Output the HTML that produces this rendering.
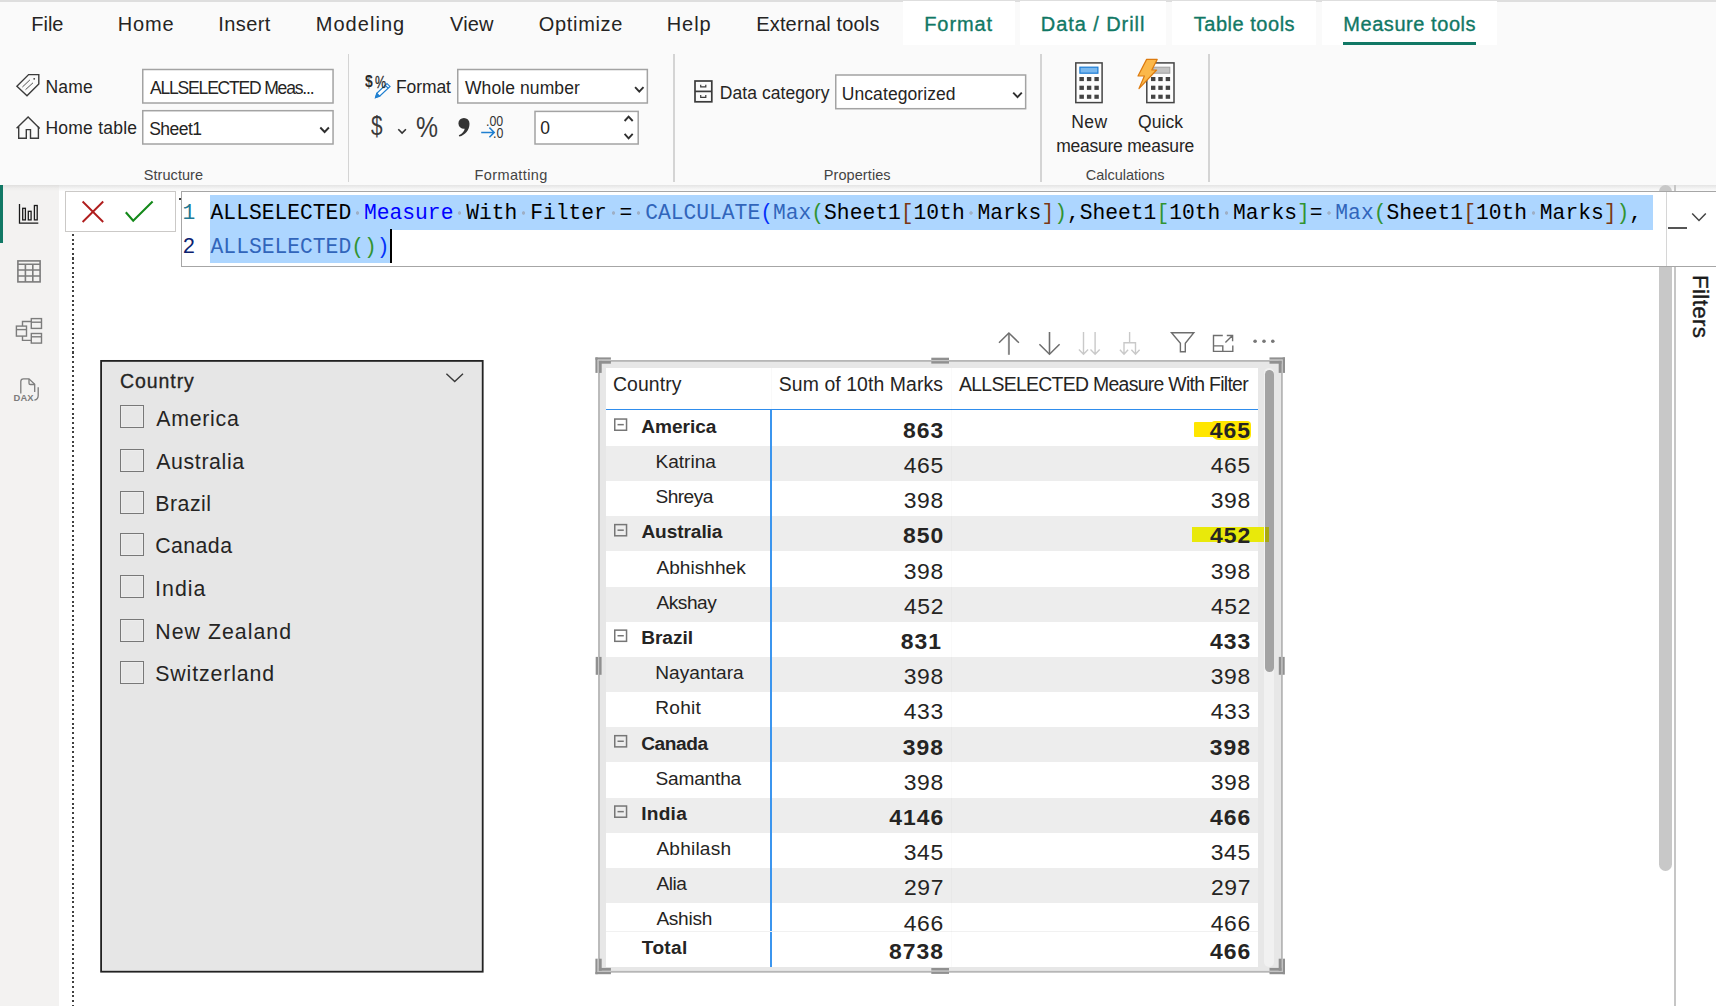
<!DOCTYPE html>
<html lang="en">
<head>
<meta charset="utf-8">
<title>Power BI Desktop - Measure tools</title>
<style>
html,body{margin:0;padding:0;}
body{width:1716px;height:1006px;overflow:hidden;position:relative;background:#fff;font-family:"Liberation Sans",sans-serif;color:#252423;}
.a{position:absolute;}
.t{position:absolute;line-height:0;white-space:pre;}
svg{position:absolute;overflow:visible;}
.box{position:absolute;background:#fff;border:1.5px solid #a6a6a6;box-sizing:border-box;}
.sep{position:absolute;width:1.5px;top:54px;height:128px;background:#d4d4d4;}
.tab{position:absolute;top:1px;height:44px;background:#fff;}
.cb{position:absolute;left:120px;width:24px;height:23px;box-sizing:border-box;border:1px solid #787878;background:#e7e7e7;box-shadow:inset 0 0 0 1px #ececec;}
.row{position:absolute;left:606px;width:652px;height:35.18px;}
.g{background:#ededed;}
.ex{position:absolute;left:613.8px;width:13.4px;height:13px;box-sizing:border-box;border:1.6px solid #737373;}
.ex:after{content:"";position:absolute;left:2px;right:2px;top:4.1px;height:1.7px;background:#5f5f5f;}
.m{font-family:"Liberation Mono",monospace;font-size:21.3px;position:absolute;white-space:pre;line-height:0;left:210.6px;}
.m i{font-style:normal;background:radial-gradient(circle at 50% 50%,#9fb0c6 0,#9fb0c6 1.4px,transparent 2px);}
</style>
</head>
<body>
<!-- ================= RIBBON ================= -->
<div class="a" id="ribbon" style="left:0;top:0;width:1716px;height:185px;background:#fafafa;"></div>
<div class="a" style="left:0;top:0;width:1716px;height:1.5px;background:#dedede;"></div>
<div class="tab" style="left:903px;width:112px;"></div>
<div class="tab" style="left:1020px;width:146px;"></div>
<div class="tab" style="left:1172px;width:144px;"></div>
<div class="tab" style="left:1322px;width:175px;"></div>
<div class="a" style="left:1343px;top:41.5px;width:133px;height:3.5px;background:#117865;"></div>
<!-- ribbon bottom shadow -->
<div class="a" style="left:0;top:185px;width:1716px;height:6px;background:linear-gradient(#e4e4e4,#f3f3f3 55%,#fcfcfc);"></div>
<!-- group separators -->
<div class="sep" style="left:347.5px;"></div>
<div class="sep" style="left:673px;"></div>
<div class="sep" style="left:1040px;"></div>
<div class="sep" style="left:1208px;"></div>
<!-- inputs -->
<svg class="a" style="left:0;top:0;" width="1716" height="1006" fill="#fff" stroke="#a3a3a3" stroke-width="1.5">
<rect x="142.75" y="69.5" width="190.3" height="33.5"/>
<rect x="142.75" y="110.7" width="190.3" height="33.3"/>
<rect x="457.75" y="69.5" width="189.6" height="33.5"/>
<rect x="535" y="111.4" width="103.2" height="32.6"/>
<rect x="835.75" y="75" width="189.9" height="33.7"/>
</svg>
<!-- ================= LEFT NAV ================= -->
<div class="a" style="left:0;top:185px;width:58.5px;height:821px;background:#f3f2f1;"></div>
<div class="a" style="left:0;top:185px;width:58.5px;height:6px;background:linear-gradient(#e0dfde,#eeedec 55%,#f3f2f1);"></div>
<div class="a" style="left:0;top:185px;width:2.8px;height:57.5px;background:#117865;"></div>
<!-- ================= CANVAS ================= -->
<div class="a" style="left:72px;top:234.2px;width:2px;height:772px;background:repeating-linear-gradient(#404040 0,#404040 2px,transparent 2px,transparent 4.7px);"></div>
<!-- outer scrollbar + filters pane -->
<div class="a" style="left:1659px;top:185px;width:13px;height:686px;background:#c8c8c8;border-radius:6.5px;"></div>
<div class="a" style="left:1674.3px;top:185px;width:1.4px;height:821px;background:#c6c6c6;"></div>
<!-- ================= FORMULA BAR ================= -->
<div class="a" style="left:65.2px;top:191px;width:110.7px;height:40.7px;box-sizing:border-box;border:1px solid #cbc9c7;background:#fff;"></div>
<div class="a" style="left:181px;top:191px;width:1535px;height:75.8px;box-sizing:border-box;border:1px solid #a6a6a6;border-right:0;background:#fff;"></div>
<div class="a" style="left:1666px;top:192px;width:1px;height:74px;background:#d6d6d6;"></div>
<div class="a" style="left:210px;top:195.4px;width:1443px;height:34.2px;background:#add6ff;"></div>
<div class="a" style="left:210px;top:229.6px;width:180px;height:33.8px;background:#add6ff;"></div>
<div class="a" style="left:390px;top:229.3px;width:2.2px;height:34.2px;background:#000;"></div>
<div class="a" style="left:1667.5px;top:227.3px;width:19.5px;height:2.2px;background:#555;"></div>
<div class="a" style="left:178.8px;top:198px;width:2px;height:1.8px;background:#3a3a3a;"></div>
<div class="m" style="top:213.00px;"><span style="color:#000000">ALLSELECTED</span><i> </i><span style="color:#0000ff">Measure</span><i> </i><span style="color:#000000">With</span><i> </i><span style="color:#000000">Filter</span><i> </i><span style="color:#000000">=</span><i> </i><span style="color:#3165bb">CALCULATE</span><span style="color:#0431fa">(</span><span style="color:#3165bb">Max</span><span style="color:#319331">(</span><span style="color:#000000">Sheet1</span><span style="color:#7b3814">[</span><span style="color:#000000">10th</span><i> </i><span style="color:#000000">Marks</span><span style="color:#7b3814">]</span><span style="color:#319331">)</span><span style="color:#000000">,</span><span style="color:#000000">Sheet1</span><span style="color:#319331">[</span><span style="color:#000000">10th</span><i> </i><span style="color:#000000">Marks</span><span style="color:#319331">]</span><span style="color:#000000">=</span><i> </i><span style="color:#3165bb">Max</span><span style="color:#319331">(</span><span style="color:#000000">Sheet1</span><span style="color:#7b3814">[</span><span style="color:#000000">10th</span><i> </i><span style="color:#000000">Marks</span><span style="color:#7b3814">]</span><span style="color:#319331">)</span><span style="color:#000000">,</span></div>
<div class="m" style="top:247.00px;"><span style="color:#3165bb">ALLSELECTED</span><span style="color:#319331">(</span><span style="color:#319331">)</span><span style="color:#0431fa">)</span></div>
<div class="m" style="left:182.6px;top:213.00px;color:#237893;">1</div>
<div class="m" style="left:182.6px;top:247.00px;color:#0b216f;">2</div>
<!-- ================= SLICER ================= -->
<svg class="a" style="left:0;top:0;" width="1716" height="1006"><rect x="101.1" y="360.9" width="381.6" height="610.8" fill="#e6e6e6" stroke="#222" stroke-width="1.8"/></svg>
<div class="cb" style="top:405px;"></div>
<div class="cb" style="top:449px;"></div>
<div class="cb" style="top:491px;"></div>
<div class="cb" style="top:533px;"></div>
<div class="cb" style="top:575px;"></div>
<div class="cb" style="top:619px;"></div>
<div class="cb" style="top:661px;"></div>
<!-- ================= TABLE VISUAL ================= -->
<svg class="a" style="left:0;top:0;" width="1716" height="1006"><rect x="599" y="360.9" width="682.9" height="610.9" fill="#e7e7e7" stroke="#b6b6b6" stroke-width="1.8"/></svg>
<div class="a" style="left:606px;top:368px;width:652px;height:599px;background:#fff;"></div>
<div class="row g" style="top:445.78px;height:35.18px;"></div>
<div class="row g" style="top:516.14px;height:35.18px;"></div>
<div class="row g" style="top:586.50px;height:35.18px;"></div>
<div class="row g" style="top:656.86px;height:35.18px;"></div>
<div class="row g" style="top:727.22px;height:35.18px;"></div>
<div class="row g" style="top:797.58px;height:35.18px;"></div>
<div class="row g" style="top:867.94px;height:35.18px;"></div>
<svg class="a" style="left:0;top:0;" width="1716" height="1006" fill="none" stroke="#767676" stroke-width="1.5"><rect x="614.75" y="419.05" width="11.8" height="11.2"/><path d="M617.5 424.65H623.8"/><rect x="614.75" y="524.59" width="11.8" height="11.2"/><path d="M617.5 530.19H623.8"/><rect x="614.75" y="630.13" width="11.8" height="11.2"/><path d="M617.5 635.73H623.8"/><rect x="614.75" y="735.67" width="11.8" height="11.2"/><path d="M617.5 741.27H623.8"/><rect x="614.75" y="806.03" width="11.8" height="11.2"/><path d="M617.5 811.63H623.8"/></svg>
<div class="a" style="left:606px;top:408.9px;width:652px;height:1.6px;background:#2f8ded;"></div>
<div class="a" style="left:770.2px;top:410px;width:1.7px;height:557px;background:#3b95ee;"></div>
<div class="a" style="left:606px;top:931px;width:652px;height:1px;background:#f1f1f1;"></div>
<div class="a" style="left:951px;top:368px;width:1px;height:599px;background:rgba(0,0,0,0.02);"></div>
<div class="a" style="left:771px;top:368px;width:1px;height:41px;background:rgba(0,0,0,0.025);"></div>
<!-- highlight -->
<div class="a" style="left:1194px;top:421.9px;width:24px;height:14.9px;background:#ffe600;border-radius:1px;"></div>
<div class="a" style="left:1211px;top:421px;width:40.2px;height:19px;background:#ffe600;border-radius:4px 4px 5px 8px;"></div>
<div class="a" style="left:1192px;top:527px;width:77px;height:14.6px;background:#e9e90a;"></div>
<!-- inner scrollbar -->
<div class="a" style="left:1263.8px;top:368px;width:10.4px;height:598.6px;background:#f1f1f1;border-radius:5.2px;"></div>
<div class="a" style="left:1265px;top:369.5px;width:8.8px;height:302.5px;background:#a3a3a3;border-radius:4.4px;"></div>
<div class="a" style="left:1265px;top:527px;width:4px;height:14.6px;background:#a8a810;"></div>
<svg class="a" style="left:0;top:0;" width="1716" height="1006" shape-rendering="auto"><rect x="595.40" y="357.40" width="15.50" height="2.30" fill="#909090"/><rect x="595.40" y="357.40" width="2.30" height="15.50" fill="#909090"/><rect x="597.70" y="359.70" width="13.20" height="1.20" fill="#c6c6c6"/><rect x="597.70" y="359.70" width="1.20" height="13.20" fill="#c6c6c6"/><rect x="598.90" y="360.90" width="12.00" height="2.80" fill="#909090"/><rect x="598.90" y="360.90" width="2.80" height="12.00" fill="#909090"/><rect x="1269.50" y="357.40" width="15.50" height="2.30" fill="#909090"/><rect x="1282.70" y="357.40" width="2.30" height="15.50" fill="#909090"/><rect x="1269.50" y="359.70" width="13.20" height="1.20" fill="#c6c6c6"/><rect x="1281.50" y="359.70" width="1.20" height="13.20" fill="#c6c6c6"/><rect x="1269.50" y="360.90" width="12.00" height="2.80" fill="#909090"/><rect x="1278.70" y="360.90" width="2.80" height="12.00" fill="#909090"/><rect x="595.40" y="971.90" width="15.50" height="2.30" fill="#909090"/><rect x="595.40" y="958.70" width="2.30" height="15.50" fill="#909090"/><rect x="597.70" y="970.70" width="13.20" height="1.20" fill="#c6c6c6"/><rect x="597.70" y="958.70" width="1.20" height="13.20" fill="#c6c6c6"/><rect x="598.90" y="967.90" width="12.00" height="2.80" fill="#909090"/><rect x="598.90" y="958.70" width="2.80" height="12.00" fill="#909090"/><rect x="1269.50" y="971.90" width="15.50" height="2.30" fill="#909090"/><rect x="1282.70" y="958.70" width="2.30" height="15.50" fill="#909090"/><rect x="1269.50" y="970.70" width="13.20" height="1.20" fill="#c6c6c6"/><rect x="1281.50" y="958.70" width="1.20" height="13.20" fill="#c6c6c6"/><rect x="1269.50" y="967.90" width="12.00" height="2.80" fill="#909090"/><rect x="1278.70" y="958.70" width="2.80" height="12.00" fill="#909090"/><rect x="931.30" y="357.70" width="17.70" height="2.30" fill="#909090"/><rect x="931.30" y="360.00" width="17.70" height="1.20" fill="#c6c6c6"/><rect x="931.30" y="361.20" width="17.70" height="2.40" fill="#909090"/><rect x="931.30" y="971.60" width="17.70" height="2.30" fill="#909090"/><rect x="931.30" y="970.40" width="17.70" height="1.20" fill="#c6c6c6"/><rect x="931.30" y="968.00" width="17.70" height="2.40" fill="#909090"/><rect x="595.70" y="656.90" width="2.30" height="17.90" fill="#909090"/><rect x="598.00" y="656.90" width="1.20" height="17.90" fill="#c6c6c6"/><rect x="599.20" y="656.90" width="2.40" height="17.90" fill="#909090"/><rect x="1282.40" y="656.90" width="2.30" height="17.90" fill="#909090"/><rect x="1281.20" y="656.90" width="1.20" height="17.90" fill="#c6c6c6"/><rect x="1278.80" y="656.90" width="2.40" height="17.90" fill="#909090"/></svg>
<svg class="a" style="left:0;top:0;" width="1716" height="1006" viewBox="0 0 1716 1006" fill="none" stroke-linecap="butt" stroke-linejoin="miter">
<!-- tag (Name) -->
<g stroke="#3b3b3b" stroke-width="1.4">
<path d="M28.6 74.6H38.8V83.9L27 95.8L16.9 86.2Z"/>
<path d="M22.4 87L29.9 79.9M25.5 89.7L33 82.8" stroke-width="1" stroke="#555"/>
<circle cx="34.2" cy="78.8" r="0.9" fill="#3b3b3b" stroke="none"/>
<!-- home -->
<path d="M16.6 128.2L28.1 116.9L39.7 128.4"/>
<path d="M18.7 126.5V138.3H26.3V129.6H30.5V138.3H38.4V126.5"/>
</g>
<!-- pencil of $% icon -->
<g stroke="#1f7fd0" stroke-width="1.2">
<path d="M387 83.6L390 86.4L379.6 96.2L375.6 97.6L376.8 93.4Z" fill="#fff"/>
<path d="M385.2 85.4L388.2 88.2"/>
<path d="M376.9 93.5L379.5 96.1L375.6 97.6Z" fill="#1f7fd0"/>
</g>
<!-- small chevron after $ -->
<path d="M398.3 129.2L402.1 133.1L405.9 129.2" stroke="#333" stroke-width="1.6"/>
<!-- comma -->
<path d="M463.9 117.9a5.6 5.6 0 0 1 5.6 5.8c0 6.2-4.4 11.3-10.2 12.9l-0.5-1.3c3.6-1.6 5.6-4.2 5.9-6.6a5.4 5.4 0 0 1-6.3-5.2a5.5 5.5 0 0 1 5.5-5.6z" fill="#333" stroke="none"/>
<!-- decimal arrow -->
<path d="M481.2 132.4H494M489.4 127.6L494.2 132.4L489.4 137.2" stroke="#1f7fd0" stroke-width="1.5"/>
<!-- select arrows -->
<g stroke="#2f2f2f" stroke-width="1.9">
<path d="M320.3 127.5L324.6 132L328.9 127.5"/>
<path d="M635.1 87.1L639.3 91.6L643.5 87.1"/>
<path d="M1013.2 92.6L1017.5 97.1L1021.8 92.6"/>
<path d="M624.6 121L628.6 116.6L632.7 121"/>
<path d="M624.6 133.9L628.6 138.3L632.7 133.9"/>
</g>
<!-- data category -->
<g stroke="#3b3b3b" stroke-width="1.7">
<rect x="695" y="81" width="16.8" height="20.8"/>
<path d="M695 91.4H711.8"/>
<path d="M700.7 84.8V86.9H705.8V84.8M700.7 95.1V97.4H705.8V95.1" stroke-width="1.2"/>
</g>
<!-- calculator 1 -->
<g>
<rect x="1075.8" y="62.9" width="26.3" height="39.7" stroke="#444" stroke-width="1.5" fill="#fdfdfd"/>
<rect x="1079.9" y="67.2" width="18" height="6" fill="#7ab8ee" stroke="#1c7cd5" stroke-width="1.2"/>
<g fill="#444" stroke="none">
<rect x="1079.4" y="77" width="4.5" height="4.1"/><rect x="1086.9" y="77" width="4.4" height="4.1"/><rect x="1094.4" y="77" width="4.4" height="4.1"/>
<rect x="1079.4" y="85.7" width="4.5" height="4.2"/><rect x="1086.9" y="85.7" width="4.4" height="4.2"/><rect x="1094.4" y="85.7" width="4.4" height="4.2"/>
<rect x="1079.4" y="94.7" width="4.5" height="4.1"/><rect x="1086.9" y="94.7" width="4.4" height="4.1"/><rect x="1094.4" y="94.7" width="4.4" height="4.1"/>
</g>
</g>
<!-- calculator 2 (quick) -->
<g>
<rect x="1146.8" y="62.9" width="27.2" height="39.7" stroke="#444" stroke-width="1.5" fill="#fdfdfd"/>
<rect x="1153" y="67.2" width="16.8" height="6" fill="#c2c2c2" stroke="#a0a0a0" stroke-width="1"/>
<g fill="#444" stroke="none">
<rect x="1151" y="77" width="4.4" height="4.1"/><rect x="1158.3" y="77" width="4.4" height="4.1"/><rect x="1165.7" y="77" width="4.4" height="4.1"/>
<rect x="1151" y="85.7" width="4.4" height="4.2"/><rect x="1158.3" y="85.7" width="4.4" height="4.2"/><rect x="1165.7" y="85.7" width="4.4" height="4.2"/>
<rect x="1151" y="94.7" width="4.4" height="4.1"/><rect x="1158.3" y="94.7" width="4.4" height="4.1"/><rect x="1165.7" y="94.7" width="4.4" height="4.1"/>
</g>
<path d="M1146.6 59.4L1157.2 59.4L1151.8 70L1156.6 70L1139 88.6L1144.4 76L1138 76Z" fill="#fbb84a" stroke="#dc7a0e" stroke-width="1.2" stroke-linejoin="round"/>
</g>
<!-- left nav: report -->
<g stroke="#1b1b1b" stroke-width="1.3">
<path d="M19.5 204V223.2H38.3"/>
<rect x="22.7" y="208.3" width="2.7" height="11.6"/>
<rect x="28.3" y="211.3" width="2.8" height="8.6"/>
<rect x="34.4" y="205.5" width="2.8" height="14.4"/>
</g>
<!-- left nav: table -->
<g stroke="#7c7c7c" stroke-width="1.6">
<rect x="17.9" y="260.9" width="22.2" height="21"/>
<path d="M17.9 264.2H40.1M17.9 270H40.1M17.9 276H40.1M25.4 264.2V281.9M32.8 264.2V281.9"/>
</g>
<!-- left nav: model -->
<g stroke="#7c7c7c" stroke-width="1.4">
<rect x="16.4" y="326.1" width="10.1" height="10"/><path d="M16.4 329.6H26.5"/>
<rect x="31.3" y="318.6" width="10.2" height="9.8"/><path d="M31.3 322.2H41.5"/>
<rect x="31.3" y="333.5" width="10.2" height="9.6"/><path d="M31.3 336.8H41.5"/>
<path d="M22.5 326.1V321.5H31.3M22.5 336.1V340.4H31.3"/>
</g>
<!-- left nav: dax -->
<g stroke="#7c7c7c" stroke-width="1.3">
<path d="M20.8 393.6V381.6Q20.8 378.9 23.5 378.9H29L34.7 384.4V392"/>
<path d="M29 379V383.2Q29 384.5 30.3 384.5H34.6"/>
<path d="M38.2 387.2V395.4Q38.2 399.3 34.4 400.2"/>
</g>
<!-- formula X / check -->
<path d="M82.6 201.5L103.2 222M103.2 201.5L82.6 222" stroke="#b01e1e" stroke-width="1.9"/>
<path d="M125.8 212.2L133.2 220.8L152.6 201.6" stroke="#14891a" stroke-width="2.1"/>
<!-- formula chevron -->
<path d="M1692.2 213.4L1699 220.4L1705.8 213.4" stroke="#444" stroke-width="1.5"/>
<!-- slicer chevron -->
<path d="M446.4 373.8L454.7 381.6L463 373.8" stroke="#3a3a3a" stroke-width="1.4"/>
<!-- visual header icons -->
<g stroke="#6e6e6e" stroke-width="1.5">
<path d="M1008.9 333V354.8" stroke-width="2" stroke="#8a8a8a"/><path d="M999 342.8L1008.9 333L1018.9 342.8"/>
<path d="M1049.5 332V354" stroke-width="1.6"/><path d="M1039.4 344.2L1049.5 354.3L1059.6 344.2"/>
<path d="M1171.5 332.8H1193.8L1185.3 343.2V351.8H1180.4V343.2Z" stroke-width="1.4"/>
<path d="M1222.8 335.5H1213.5V351.4H1232.8V345.4M1213.5 345.9H1222.8V351.4M1225.4 342.4L1232.5 335.5M1226.8 335.5H1232.6V341.3" stroke-width="1.4"/>
</g>
<g fill="#777" stroke="none"><circle cx="1255.1" cy="341.2" r="1.8"/><circle cx="1264" cy="341.2" r="1.8"/><circle cx="1272.8" cy="341.2" r="1.8"/></g>
<g stroke="#c9c9c9" stroke-width="1.4">
<path d="M1083.5 332V354M1078.9 349.6L1083.5 354.2L1088.1 349.6M1095.1 332V354M1090.5 349.6L1095.1 354.2L1099.7 349.6"/>
<path d="M1129.6 332V342.7M1124 354V342.7H1135.5V354M1119.9 349.8L1124 354.2L1128.1 349.8M1131.4 349.8L1135.5 354.2L1139.6 349.8"/>
</g>
</svg>
<span class="t" style="left:365.2px;top:80.8px;font-size:17.4px;font-weight:700;color:#2b2b2b;transform:scaleX(0.8);transform-origin:0 0;">$</span>
<span class="t" style="left:374.6px;top:83px;font-size:16px;color:#2b2b2b;-webkit-text-stroke:0.3px #2b2b2b;transform:scaleX(0.78);transform-origin:0 0;">%</span>
<span class="t" style="left:371.4px;top:126.4px;font-size:27.4px;color:#3a3a3a;transform:scaleX(0.76);transform-origin:0 0;">$</span>
<span class="t" style="left:415.6px;top:127.4px;font-size:29.5px;color:#3a3a3a;transform:scaleX(0.84);transform-origin:0 0;">%</span>
<span class="t" style="left:485.8px;top:121.2px;font-size:14.4px;color:#333;transform:scaleX(0.86);transform-origin:0 0;">.00</span>
<span class="t" style="left:492.6px;top:132.8px;font-size:14.4px;color:#333;transform:scaleX(0.86);transform-origin:0 0;">.0</span>
<span class="t" style="left:13.6px;top:398px;font-size:9.4px;font-weight:700;color:#7c7c7c;letter-spacing:0.1px;">DAX</span>
<span class="t" style="left:1699.7px;top:274.8px;font-size:22.4px;color:#1b1b1b;transform:rotate(90deg);transform-origin:0 0;letter-spacing:0.35px;-webkit-text-stroke:0.4px #1b1b1b;">Filters</span>

<span class="t" style="left:31.35px;top:24.00px;font-size:20px;letter-spacing:-0.033px;">File</span>
<span class="t" style="left:117.65px;top:24.00px;font-size:20px;letter-spacing:0.917px;">Home</span>
<span class="t" style="left:218.25px;top:24.00px;font-size:20px;letter-spacing:0.4px;">Insert</span>
<span class="t" style="left:315.75px;top:24.00px;font-size:20px;letter-spacing:1.036px;">Modeling</span>
<span class="t" style="left:450.00px;top:24.00px;font-size:20px;letter-spacing:0.167px;">View</span>
<span class="t" style="left:538.75px;top:24.00px;font-size:20px;letter-spacing:0.679px;">Optimize</span>
<span class="t" style="left:666.75px;top:24.00px;font-size:20px;letter-spacing:0.917px;">Help</span>
<span class="t" style="left:756.25px;top:24.00px;font-size:20px;letter-spacing:0.154px;">External tools</span>
<span class="t" style="left:924.25px;top:24.00px;font-size:20px;letter-spacing:0.9px;color:#117865;-webkit-text-stroke:0.35px #117865;">Format</span>
<span class="t" style="left:1040.75px;top:24.00px;font-size:20px;letter-spacing:0.932px;color:#117865;-webkit-text-stroke:0.35px #117865;">Data / Drill</span>
<span class="t" style="left:1193.75px;top:24.00px;font-size:20px;letter-spacing:0.525px;color:#117865;-webkit-text-stroke:0.35px #117865;">Table tools</span>
<span class="t" style="left:1343.25px;top:24.00px;font-size:20px;letter-spacing:0.562px;color:#117865;-webkit-text-stroke:0.35px #117865;">Measure tools</span>
<span class="t" style="left:45.50px;top:87.00px;font-size:17.5px;letter-spacing:0.167px;">Name</span>
<span class="t" style="left:45.50px;top:128.00px;font-size:17.5px;letter-spacing:0.222px;">Home table</span>
<span class="t" style="left:150.00px;top:88.00px;font-size:17.5px;letter-spacing:-1.181px;">ALLSELECTED Meas...</span>
<span class="t" style="left:149.25px;top:129.00px;font-size:17.5px;letter-spacing:-0.55px;">Sheet1</span>
<span class="t" style="left:396.00px;top:87.00px;font-size:17.5px;letter-spacing:-0.1px;">Format</span>
<span class="t" style="left:465.00px;top:88.00px;font-size:17.5px;letter-spacing:0.091px;">Whole number</span>
<span class="t" style="left:540.25px;top:128.00px;font-size:17.5px;">0</span>
<span class="t" style="left:719.75px;top:93.00px;font-size:17.5px;letter-spacing:0.062px;">Data category</span>
<span class="t" style="left:841.75px;top:94.00px;font-size:17.5px;letter-spacing:0.083px;">Uncategorized</span>
<span class="t" style="left:1071.30px;top:122.00px;font-size:17.5px;letter-spacing:0.4px;">New</span>
<span class="t" style="left:1056.15px;top:146.00px;font-size:17.5px;letter-spacing:-0.25px;">measure</span>
<span class="t" style="left:1138.05px;top:122.00px;font-size:17.5px;letter-spacing:0.05px;">Quick</span>
<span class="t" style="left:1127.15px;top:146.00px;font-size:17.5px;letter-spacing:-0.15px;">measure</span>
<span class="t" style="left:143.75px;top:175.00px;font-size:14.5px;letter-spacing:0.062px;color:#444;">Structure</span>
<span class="t" style="left:474.50px;top:175.00px;font-size:14.5px;letter-spacing:0.389px;color:#444;">Formatting</span>
<span class="t" style="left:823.75px;top:175.00px;font-size:14.5px;letter-spacing:0.083px;color:#444;">Properties</span>
<span class="t" style="left:1085.85px;top:175.00px;font-size:14.5px;letter-spacing:-0.032px;color:#444;">Calculations</span>
<span class="t" style="left:119.90px;top:381.00px;font-size:19.5px;letter-spacing:0.942px;-webkit-text-stroke:0.3px #252423;">Country</span>
<span class="t" style="left:156.20px;top:419.00px;font-size:21.3px;letter-spacing:0.75px;">America</span>
<span class="t" style="left:156.20px;top:462.00px;font-size:21.3px;letter-spacing:0.644px;">Australia</span>
<span class="t" style="left:155.25px;top:504.00px;font-size:21.3px;letter-spacing:0.5px;">Brazil</span>
<span class="t" style="left:155.20px;top:546.00px;font-size:21.3px;letter-spacing:0.44px;">Canada</span>
<span class="t" style="left:155.00px;top:589.00px;font-size:21.3px;letter-spacing:1.062px;">India</span>
<span class="t" style="left:155.25px;top:632.00px;font-size:21.3px;letter-spacing:1.035px;">New Zealand</span>
<span class="t" style="left:155.20px;top:674.00px;font-size:21.3px;letter-spacing:0.885px;">Switzerland</span>
<span class="t" style="left:612.90px;top:384.00px;font-size:19.4px;letter-spacing:0.125px;">Country</span>
<span class="t" style="left:778.80px;top:384.00px;font-size:19.4px;letter-spacing:0.088px;">Sum of 10th Marks</span>
<span class="t" style="left:959.00px;top:384.00px;font-size:19.4px;letter-spacing:-0.69px;">ALLSELECTED Measure With Filter</span>
<span class="t" style="left:641.30px;top:427.00px;font-size:19.1px;letter-spacing:-0.033px;font-weight:700;">America</span>
<span class="t" style="left:902.95px;top:430.00px;font-size:22.9px;letter-spacing:1.0px;font-weight:700;">863</span>
<span class="t" style="left:1209.70px;top:430.00px;font-size:22.9px;letter-spacing:1.0px;font-weight:700;">465</span>
<span class="t" style="left:655.40px;top:462.00px;font-size:19.1px;letter-spacing:0.017px;">Katrina</span>
<span class="t" style="left:903.70px;top:465.00px;font-size:22.9px;letter-spacing:0.65px;">465</span>
<span class="t" style="left:1210.70px;top:465.00px;font-size:22.9px;letter-spacing:0.65px;">465</span>
<span class="t" style="left:655.40px;top:497.00px;font-size:19.1px;letter-spacing:-0.5px;">Shreya</span>
<span class="t" style="left:903.70px;top:500.00px;font-size:22.9px;letter-spacing:0.65px;">398</span>
<span class="t" style="left:1210.70px;top:500.00px;font-size:22.9px;letter-spacing:0.65px;">398</span>
<span class="t" style="left:641.40px;top:532.00px;font-size:19.1px;letter-spacing:-0.081px;font-weight:700;">Australia</span>
<span class="t" style="left:902.95px;top:535.00px;font-size:22.9px;letter-spacing:1.0px;font-weight:700;">850</span>
<span class="t" style="left:1209.95px;top:535.00px;font-size:22.9px;letter-spacing:1.0px;font-weight:700;">452</span>
<span class="t" style="left:656.40px;top:568.00px;font-size:19.1px;letter-spacing:0.025px;">Abhishhek</span>
<span class="t" style="left:903.70px;top:571.00px;font-size:22.9px;letter-spacing:0.65px;">398</span>
<span class="t" style="left:1210.70px;top:571.00px;font-size:22.9px;letter-spacing:0.65px;">398</span>
<span class="t" style="left:656.40px;top:603.00px;font-size:19.1px;letter-spacing:-0.44px;">Akshay</span>
<span class="t" style="left:903.95px;top:606.00px;font-size:22.9px;letter-spacing:0.65px;">452</span>
<span class="t" style="left:1210.95px;top:606.00px;font-size:22.9px;letter-spacing:0.65px;">452</span>
<span class="t" style="left:641.15px;top:638.00px;font-size:19.1px;font-weight:700;">Brazil</span>
<span class="t" style="left:900.70px;top:641.00px;font-size:22.9px;letter-spacing:1.0px;font-weight:700;">831</span>
<span class="t" style="left:1209.95px;top:641.00px;font-size:22.9px;letter-spacing:1.0px;font-weight:700;">433</span>
<span class="t" style="left:655.30px;top:673.00px;font-size:19.1px;letter-spacing:0.031px;">Nayantara</span>
<span class="t" style="left:903.70px;top:676.00px;font-size:22.9px;letter-spacing:0.65px;">398</span>
<span class="t" style="left:1210.70px;top:676.00px;font-size:22.9px;letter-spacing:0.65px;">398</span>
<span class="t" style="left:655.30px;top:708.00px;font-size:19.1px;letter-spacing:0.225px;">Rohit</span>
<span class="t" style="left:903.70px;top:711.00px;font-size:22.9px;letter-spacing:0.65px;">433</span>
<span class="t" style="left:1210.70px;top:711.00px;font-size:22.9px;letter-spacing:0.65px;">433</span>
<span class="t" style="left:641.15px;top:744.00px;font-size:19.1px;letter-spacing:-0.38px;font-weight:700;">Canada</span>
<span class="t" style="left:902.70px;top:747.00px;font-size:22.9px;letter-spacing:1.0px;font-weight:700;">398</span>
<span class="t" style="left:1209.70px;top:747.00px;font-size:22.9px;letter-spacing:1.0px;font-weight:700;">398</span>
<span class="t" style="left:655.40px;top:779.00px;font-size:19.1px;letter-spacing:-0.171px;">Samantha</span>
<span class="t" style="left:903.70px;top:782.00px;font-size:22.9px;letter-spacing:0.65px;">398</span>
<span class="t" style="left:1210.70px;top:782.00px;font-size:22.9px;letter-spacing:0.65px;">398</span>
<span class="t" style="left:641.15px;top:814.00px;font-size:19.1px;letter-spacing:0.275px;font-weight:700;">India</span>
<span class="t" style="left:889.20px;top:817.00px;font-size:22.9px;letter-spacing:1.0px;font-weight:700;">4146</span>
<span class="t" style="left:1209.95px;top:817.00px;font-size:22.9px;letter-spacing:1.0px;font-weight:700;">466</span>
<span class="t" style="left:656.40px;top:849.00px;font-size:19.1px;letter-spacing:0.2px;">Abhilash</span>
<span class="t" style="left:903.70px;top:852.00px;font-size:22.9px;letter-spacing:0.65px;">345</span>
<span class="t" style="left:1210.70px;top:852.00px;font-size:22.9px;letter-spacing:0.65px;">345</span>
<span class="t" style="left:656.40px;top:884.00px;font-size:19.1px;letter-spacing:-0.467px;">Alia</span>
<span class="t" style="left:903.95px;top:887.00px;font-size:22.9px;letter-spacing:0.65px;">297</span>
<span class="t" style="left:1210.95px;top:887.00px;font-size:22.9px;letter-spacing:0.65px;">297</span>
<span class="t" style="left:656.40px;top:919.00px;font-size:19.1px;letter-spacing:-0.28px;">Ashish</span>
<span class="t" style="left:903.70px;top:923.00px;font-size:22.9px;letter-spacing:0.65px;">466</span>
<span class="t" style="left:1210.70px;top:923.00px;font-size:22.9px;letter-spacing:0.65px;">466</span>
<span class="t" style="left:641.85px;top:948.00px;font-size:19.1px;letter-spacing:0.3px;font-weight:700;">Total</span>
<span class="t" style="left:888.95px;top:951.00px;font-size:22.9px;letter-spacing:1.0px;font-weight:700;">8738</span>
<span class="t" style="left:1209.95px;top:951.00px;font-size:22.9px;letter-spacing:1.0px;font-weight:700;">466</span>
</body>
</html>
